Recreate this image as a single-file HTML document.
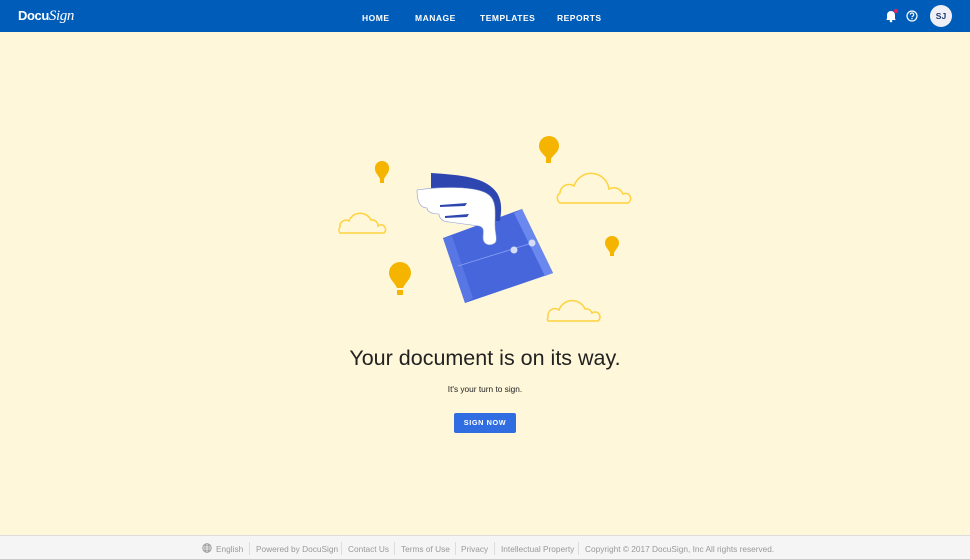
<!DOCTYPE html>
<html><head><meta charset="utf-8"><style>
*{margin:0;padding:0;box-sizing:border-box}
body{width:970px;height:560px;overflow:hidden;background:#fef7d9;font-family:"Liberation Sans",sans-serif;position:relative}
.hdr{position:absolute;left:0;top:0;width:970px;height:32px;background:#005cb9;color:#fff}
.logo{position:absolute;left:18px;top:8px;font-size:13px;font-weight:bold;letter-spacing:-0.4px}
.logo i{font-family:"Liberation Serif",serif;font-weight:normal;font-size:15px}
.nav{position:absolute;top:13px;font-size:8.5px;font-weight:bold;letter-spacing:0.5px}
.av{position:absolute;left:930px;top:5px;width:22px;height:22px;border-radius:50%;background:#eef0f5;color:#1d3a70;font-size:8.5px;font-weight:bold;text-align:center;line-height:22px}
h1{position:absolute;top:346px;left:0;width:970px;text-align:center;font-weight:normal;font-size:21.5px;color:#222}
.sub{position:absolute;top:384px;left:0;width:970px;text-align:center;font-size:8.3px;color:#222}
.btn{position:absolute;left:454px;top:413px;width:62px;height:20px;background:#2f6de1;color:#fff;font-size:7.3px;font-weight:bold;letter-spacing:0.6px;text-align:center;line-height:20px;border-radius:2px}
.ftr{position:absolute;left:0;top:535px;width:970px;height:25px;background:#f5f5f5;border-top:1px solid #ddd;border-bottom:1px solid #ccc;font-size:8.3px;color:#999}
.ftr span{position:absolute;top:8px}
.sep{position:absolute;top:6px;width:1px;height:13px;background:#ddd}
</style></head><body>
<div class="hdr">
<div class="logo">Docu<i>Sign</i></div>
<div class="nav" style="left:362px">HOME</div>
<div class="nav" style="left:415px">MANAGE</div>
<div class="nav" style="left:480px">TEMPLATES</div>
<div class="nav" style="left:557px">REPORTS</div>
<svg style="position:absolute;left:884px;top:9px" width="16" height="14" viewBox="0 0 16 14"><path d="M3 10V6a4 4 0 0 1 8 0v4l1 1H2z" fill="#fff"/><circle cx="7" cy="12" r="1.3" fill="#fff"/><circle cx="12" cy="2" r="2" fill="#e7245a"/></svg>
<svg style="position:absolute;left:906px;top:10px" width="12" height="12" viewBox="0 0 12 12"><circle cx="6" cy="6" r="5" fill="none" stroke="#fff" stroke-width="1.2"/><path d="M4.3 4.6a1.7 1.7 0 1 1 2.3 1.6c-.5.2-.6.5-.6 1" fill="none" stroke="#fff" stroke-width="1.1"/><circle cx="6" cy="8.7" r=".7" fill="#fff"/></svg>
<div class="av">SJ</div>
</div>
<svg style="position:absolute;left:0;top:0" width="970" height="535">
<g fill="none" stroke="#ffd23f" stroke-width="1.5">
<path d="M340 233h44a4 4 0 0 0-6-7 6 6 0 0 0-7-6 12 12 0 0 0-22 1 6 6 0 0 0-9 6 5 5 0 0 0 0 6z"/>
<path d="M560 203h68a5 5 0 0 0-5-9 10 10 0 0 0-14-5 18 18 0 0 0-35-3 9 9 0 0 0-14 7 6 6 0 0 0 0 10z"/>
<path d="M548 321h50a5 5 0 0 0-6-8 6 6 0 0 0-7-4 14 14 0 0 0-26 1 7 7 0 0 0-11 7 4 4 0 0 0 0 4z"/>
</g>
<g fill="#f4b400">
<path d="M382 161a7 7 0 0 1 7 8c0 4-4 7-5 10h-4c-1-3-5-6-5-10a7 7 0 0 1 7-8z"/><rect x="380" y="179" width="4" height="4"/>
<path d="M549 136a10 10 0 0 1 10 10c0 6-6 9-8 13h-4c-2-4-8-7-8-13a10 10 0 0 1 10-10z"/><rect x="546" y="158" width="5" height="5"/>
<path d="M612 236a7 7 0 0 1 7 7c0 4-4 7-5 10h-4c-1-3-5-6-5-10a7 7 0 0 1 7-7z"/><rect x="610" y="252" width="4" height="4"/>
<path d="M400 262a11 11 0 0 1 11 11c0 6-6 10-8 15h-6c-2-5-8-9-8-15a11 11 0 0 1 11-11z"/><rect x="397" y="290" width="6" height="5"/>
</g>
<path d="M443 238L522 209L553 273L465 303Z" fill="#4766dc"/>
<path d="M514 213L522 209L553 273L545 276Z" fill="#6b88ee"/>
<path d="M443 238L452 236L473 298L465 303Z" fill="#5876e4"/>
<path d="M458 266L532 243" stroke="#8aa2f2" stroke-width="0.8"/>
<circle cx="514" cy="250" r="3.5" fill="#d4dcf7"/><circle cx="532" cy="243" r="3.5" fill="#d4dcf7"/>
<path d="M431 173c30 2 55 4 66 20c6 10 4 20 3 28l-10 0c-5-14-20-20-45-24c-8-1-14-5-14-10z" fill="#2e47b0"/>
<path d="M417 190c20-3 60-5 72 5c8 6 6 20 6 30c0 8 3 15 0 18c-6 4-12 1-12-5c0-6 2-10-4-12l-30-4c-6 0-10-4-10-8c-8 0-12-3-12-6c-8 0-10-8-10-18z" fill="#fff" stroke="#8a9ad0" stroke-width="0.6"/>
<path d="M440 205l27-2l-2 3l-25 1z" fill="#2e47b0"/><path d="M445 216l24-2l-2 3l-22 1z" fill="#2e47b0"/>
</svg>
<h1>Your document is on its way.</h1>
<div class="sub">It's your turn to sign.</div>
<div class="btn">SIGN NOW</div>
<div class="ftr">
<svg style="position:absolute;left:202px;top:7px" width="10" height="10" viewBox="0 0 10 10"><g fill="none" stroke="#999" stroke-width="0.8"><circle cx="5" cy="5" r="4.3"/><ellipse cx="5" cy="5" rx="2" ry="4.3"/><path d="M.7 5h8.6M1.5 2.8h7M1.5 7.2h7"/></g></svg>
<span style="left:216px">English</span><div class="sep" style="left:249px"></div>
<span style="left:256px">Powered by DocuSign</span><div class="sep" style="left:341px"></div>
<span style="left:348px">Contact Us</span><div class="sep" style="left:394px"></div>
<span style="left:401px">Terms of Use</span><div class="sep" style="left:455px"></div>
<span style="left:461px">Privacy</span><div class="sep" style="left:494px"></div>
<span style="left:501px">Intellectual Property</span><div class="sep" style="left:578px"></div>
<span style="left:585px">Copyright © 2017 DocuSign, Inc All rights reserved.</span>
</div>
</body></html>
